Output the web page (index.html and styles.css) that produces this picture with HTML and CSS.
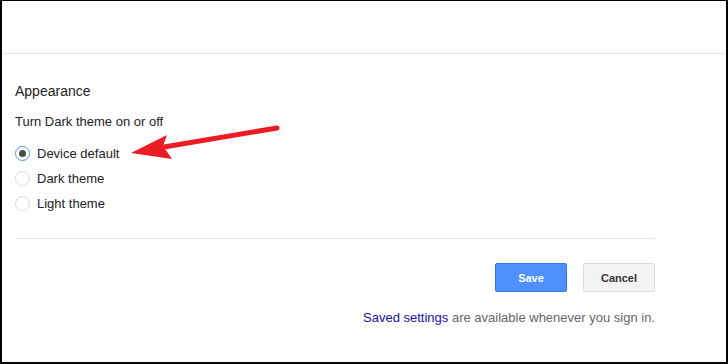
FILE: index.html
```html
<!DOCTYPE html>
<html>
<head>
<meta charset="utf-8">
<link rel="stylesheet" href="styles.css">
</head>
<body>
<div class="frame">
  <div class="header"></div>
  <div class="content">
    <h2 class="title">Appearance</h2>
    <p class="desc">Turn Dark theme on or off</p>
    <div class="options">
      <label class="option"><span class="radio checked"></span><span class="label">Device default</span></label>
      <label class="option"><span class="radio"></span><span class="label">Dark theme</span></label>
      <label class="option"><span class="radio"></span><span class="label">Light theme</span></label>
    </div>
    <div class="divider"></div>
    <div class="actions">
      <button class="btn btn-primary">Save</button>
      <button class="btn btn-default">Cancel</button>
    </div>
    <p class="note"><a class="link">Saved settings</a> are available whenever you sign in.</p>
  </div>
  <svg class="arrow" width="728" height="364" viewBox="0 0 728 364">
    <line x1="277" y1="128" x2="158" y2="148" stroke="#ec1c24" stroke-width="5" stroke-linecap="round"/>
    <polygon points="131,153 167,135 163,146 172,159" fill="#ec1c24"/>
  </svg>
</div>
</body>
</html>
```
FILE: styles.css
```css
* { box-sizing: border-box; }
html, body { margin: 0; padding: 0; background: #fff; }
body { font-family: "Liberation Sans", Arial, sans-serif; color: #222; }
.frame {
  position: relative;
  width: 728px;
  height: 364px;
  border-top: 1px solid #000;
  border-left: 2px solid #000;
  border-right: 2px solid #000;
  border-bottom: 2px solid #000;
  overflow: hidden;
}
.header {
  height: 53px;
  border-bottom: 1px solid #e5e5e5;
}
.content {
  padding-left: 13px;
  width: 653px;
}
.title {
  margin: 29px 0 0;
  font-size: 14px;
  line-height: 17px;
  font-weight: normal;
  color: #222;
}
.desc {
  margin: 14px 0 0;
  font-size: 13px;
  line-height: 16px;
}
.options {
  margin-top: 11px;
  display: flex;
  flex-direction: column;
}
.option {
  height: 25px;
  display: flex;
  align-items: center;
  font-size: 13px;
  color: #222;
}
.radio {
  width: 15px;
  height: 15px;
  border: 1px solid #dcdcdc;
  border-radius: 50%;
  margin-right: 7px;
  display: flex;
  align-items: center;
  justify-content: center;
  background: #fff;
}
.radio.checked { border-color: #4d90fe; }
.radio.checked::after {
  content: "";
  width: 7px;
  height: 7px;
  border-radius: 50%;
  background: #4a4a4a;
}
.label { line-height: 16px; }
.divider {
  margin-top: 22px;
  height: 1px;
  background: #e5e5e5;
}
.actions {
  margin-top: 24px;
  display: flex;
  justify-content: flex-end;
  gap: 16px;
}
.btn {
  width: 72px;
  height: 29px;
  border-radius: 2px;
  font-family: "Liberation Sans", Arial, sans-serif;
  font-size: 11px;
  font-weight: bold;
  padding: 0;
}
.btn-primary {
  background: #4d90fe;
  border: 1px solid #3079ed;
  color: #fff;
}
.btn-default {
  background: #f3f3f3;
  border: 1px solid #dcdcdc;
  color: #333;
}
.note {
  margin: 18px 0 0;
  text-align: right;
  font-size: 13px;
  line-height: 16px;
  color: #666;
}
.link { color: #1a0dab; }
.arrow {
  position: absolute;
  left: -2px;
  top: -1px;
  pointer-events: none;
}
```
